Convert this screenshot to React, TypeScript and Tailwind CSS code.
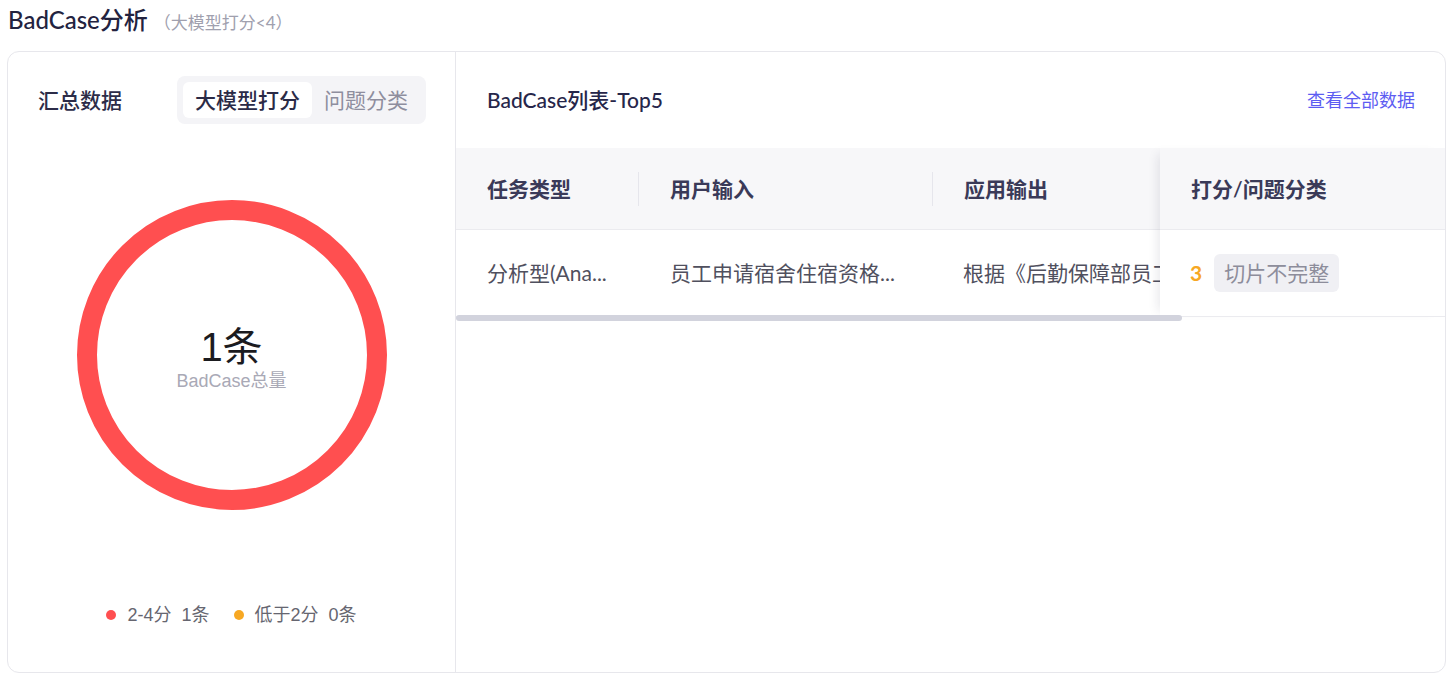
import React from 'react';

const FONT = "font-['Lato','Noto_Sans_CJK_SC',sans-serif]";

const DonutChart: React.FC = () => {
  return (
    <div className="grid place-items-center">
      <svg width="310" height="310" viewBox="0 0 310 310" className="col-start-1 row-start-1">
        <circle cx="155" cy="155" r="145" fill="none" stroke="#ff4f50" strokeWidth="20" />
      </svg>
      <div className="col-start-1 row-start-1 flex flex-col items-center pt-2 font-['Liberation_Sans','Noto_Sans_CJK_SC',sans-serif]">
        <span className="text-[40px] leading-[44px] text-[#1b1b1f]">1条</span>
        <span className="text-[18px] leading-[24px] text-[#a9a9b6]">BadCase总量</span>
      </div>
    </div>
  );
};

const HeadCell: React.FC<{ w: string; label: string; divider?: boolean }> = ({ w, label, divider }) => (
  <div className={`${w} shrink-0 h-full flex items-center`}>
    {divider && <div className="w-px h-[34px] bg-[#e6e6ec]"></div>}
    <span className="pl-[31px] text-[21px] font-semibold text-[#3a3a58] whitespace-nowrap">{label}</span>
  </div>
);

export default function App() {
  return (
    <div className={`min-h-screen bg-white px-[7px] pt-[4px] ${FONT}`}>
      {/* --- Title --- */}
      <div className="flex items-baseline gap-[6px] pl-px mb-[15px] h-[32px]">
        <h1 className="text-[24px] leading-[32px] font-medium text-[#23233f]">BadCase分析</h1>
        <span className="text-[17px] text-[#a0a0ae]">（大模型打分&lt;4）</span>
      </div>

      {/* --- Card --- */}
      <div className="w-[1439px] h-[622px] rounded-[12px] border border-[#e7e7ec] bg-white flex overflow-hidden">
        {/* Summary panel */}
        <div className="w-[448px] shrink-0 border-r border-[#e7e7ec] flex flex-col">
          <div className="flex items-center justify-between pl-[30px] pr-[29px] pt-[24px]">
            <span className="text-[21px] font-medium text-[#2c2c48]">汇总数据</span>
            <div className="flex items-center bg-[#f4f4f7] rounded-[8px] p-[6px] h-[48px]">
              <button className="h-[36px] px-[12px] rounded-[6px] bg-white text-[21px] text-[#2a2a46] font-medium">大模型打分</button>
              <button className="h-[36px] px-[12px] rounded-[6px] text-[21px] text-[#8e8e9e]">问题分类</button>
            </div>
          </div>

          <div className="mt-[76px]">
            <DonutChart />
          </div>

          <div className="mt-[93px] flex items-center justify-center gap-[24px] text-[18px] leading-[24px] text-[#666670] font-['Liberation_Sans','Noto_Sans_CJK_SC',sans-serif]">
            <div className="flex items-center gap-[11px]">
              <span className="w-[10px] h-[10px] rounded-full bg-[#ff4f50]"></span>
              <span>2-4分&nbsp;&nbsp;1条</span>
            </div>
            <div className="flex items-center gap-[11px]">
              <span className="w-[10px] h-[10px] rounded-full bg-[#f7a823]"></span>
              <span>低于2分&nbsp;&nbsp;0条</span>
            </div>
          </div>
        </div>

        {/* List panel */}
        <div className="flex-1 min-w-0 flex flex-col">
          <div className="h-[96px] flex items-center justify-between pl-[31px] pr-[30px]">
            <span className="text-[21px] font-medium text-[#26264a]">BadCase列表-Top5</span>
            <a className="text-[18px] text-[#5d5df2] cursor-pointer">查看全部数据</a>
          </div>

          <div className="flex">
            {/* Scrolling columns */}
            <div className="w-[704px] shrink-0 overflow-hidden">
              <div className="w-[900px]">
                <div className="h-[82px] flex bg-[#f7f7f9] border-b border-[#ebebef]">
                  <HeadCell w="w-[182px]" label="任务类型" />
                  <HeadCell w="w-[294px]" label="用户输入" divider />
                  <HeadCell w="w-[424px]" label="应用输出" divider />
                </div>
                <div className="h-[87px] flex items-center text-[21px] text-[#50505e] border-b border-[#ebebef]">
                  <div className="w-[182px] shrink-0 pl-[31px] whitespace-nowrap">分析型(Ana...</div>
                  <div className="w-[294px] shrink-0 pl-[32px] whitespace-nowrap">员工申请宿舍住宿资格...</div>
                  <div className="w-[424px] shrink-0 pl-[31px] whitespace-nowrap">根据《后勤保障部员工宿舍管理办法》</div>
                </div>
              </div>
            </div>

            {/* Fixed column */}
            <div className="flex-1 relative z-10 bg-white shadow-[-8px_0_10px_-6px_rgba(30,30,60,0.10)]">
              <div className="h-[82px] flex items-center pl-[31px] bg-[#f7f7f9] border-b border-[#ebebef]">
                <span className="text-[21px] font-semibold text-[#3a3a58]">打分/问题分类</span>
              </div>
              <div className="h-[87px] flex items-center gap-[12px] pl-[30px] border-b border-[#ebebef]">
                <span className="text-[21px] font-bold text-[#f7a823]">3</span>
                <span className="h-[38px] px-[10px] rounded-[6px] bg-[#f0f0f4] text-[21px] text-[#8d8d9b] flex items-center">切片不完整</span>
              </div>
            </div>
          </div>

          {/* Horizontal scrollbar thumb */}
          <div className="relative z-20 -mt-[2px] h-[6px]">
            <div className="w-[726px] h-[6px] rounded-full bg-[#d2d3dd]"></div>
          </div>
        </div>
      </div>
    </div>
  );
}
